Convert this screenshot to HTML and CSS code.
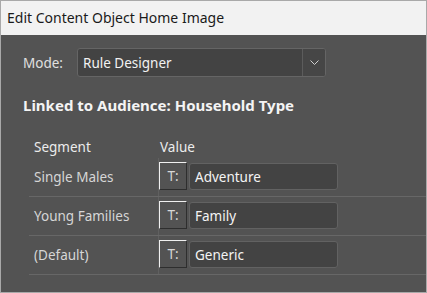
FILE: index.html
```html
<!DOCTYPE html>
<html>
<head>
<meta charset="utf-8">
<link rel="stylesheet" href="styles.css">
</head>
<body>
<div class="window">
  <div class="titlebar">Edit Content Object Home Image</div>
  <div class="panel">
    <div class="mode-row">
      <span class="mode-label">Mode:</span>
      <div class="select">
        <span class="select-value">Rule Designer</span>
        <span class="select-btn">
          <svg width="9" height="5" viewBox="0 0 9 5"><path d="M0.5 0.5 L4.5 4.5 L8.5 0.5" fill="none" stroke="#d0d0d0" stroke-width="1"/></svg>
        </span>
      </div>
    </div>
    <div class="heading">Linked to Audience: Household Type</div>
    <div class="table">
      <div class="thead">
        <span class="col-seg">Segment</span>
        <span class="col-val">Value</span>
      </div>
      <div class="row">
        <span class="col-seg">Single Males</span>
        <span class="col-val cell"><span class="tbtn">T:</span><span class="input">Adventure</span></span>
      </div>
      <div class="row">
        <span class="col-seg">Young Families</span>
        <span class="col-val cell"><span class="tbtn">T:</span><span class="input">Family</span></span>
      </div>
      <div class="row">
        <span class="col-seg">(Default)</span>
        <span class="col-val cell"><span class="tbtn">T:</span><span class="input">Generic</span></span>
      </div>
    </div>
  </div>
</div>
</body>
</html>
```
FILE: styles.css
```css
* { box-sizing: border-box; }
html, body { margin: 0; padding: 0; }
body {
  font-family: "Noto Sans", "Open Sans", sans-serif;
  font-size: 13.5px;
  background: #535353;
}
.window {
  width: 427px;
  height: 293px;
  border: 1px solid #a9a9a9;
  display: flex;
  flex-direction: column;
  background: #535353;
}
.titlebar {
  height: 34px;
  background: #f2f2f2;
  color: #1a1a1a;
  font-size: 14px;
  line-height: 34px;
  padding-left: 6px;
  flex: none;
}
.panel {
  flex: 1;
  padding-top: 13px;
  color: #e0e0e0;
}
.mode-row {
  display: flex;
  align-items: center;
  padding-left: 22px;
  height: 29px;
}
.mode-label {
  width: 54px;
  color: #e0e0e0;
}
.select {
  width: 249px;
  height: 29px;
  border: 1px solid #656565;
  border-radius: 3px;
  background: #434343;
  display: flex;
  align-items: center;
}
.select-value {
  flex: 1;
  padding-left: 5px;
  color: #f2f2f2;
}
.select-btn {
  width: 23px;
  height: 100%;
  border-left: 1px solid #5c5c5c;
  display: flex;
  align-items: center;
  justify-content: center;
  background: #464646;
  border-radius: 0 2px 2px 0;
}
.heading {
  margin-top: 18px;
  padding-left: 22px;
  line-height: 20px;
  font-size: 15px;
  font-weight: bold;
  color: #f4f4f4;
}
.table {
  margin-top: 21px;
  margin-left: 28px;
}
.thead {
  display: flex;
  height: 22px;
  align-items: center;
  color: #ececec;
}
.col-seg {
  width: 129px;
  padding-left: 5px;
  flex: none;
}
.col-val {
  flex: 1;
  padding-left: 2px;
}
.row {
  display: flex;
  height: 39px;
  border-bottom: 1px solid #676767;
  color: #d6d6d6;
}
.row .col-seg {
  display: flex;
  align-items: center;
}
.cell {
  border-left: 1px solid #606060;
  padding: 4px 0 0 0;
  display: flex;
  align-items: flex-start;
  gap: 2px;
}
.tbtn {
  width: 28px;
  height: 28px;
  border: 1px solid;
  border-color: #f0f0f0 #2e2e2e #2e2e2e #f0f0f0;
  display: flex;
  align-items: center;
  justify-content: center;
  color: #d8d8d8;
}
.input {
  width: 149px;
  height: 27px;
  margin-top: 1px;
  border: 1px solid #626262;
  border-radius: 3px;
  background: #434343;
  color: #f4f4f4;
  padding-left: 5px;
  display: flex;
  align-items: center;
}
```
